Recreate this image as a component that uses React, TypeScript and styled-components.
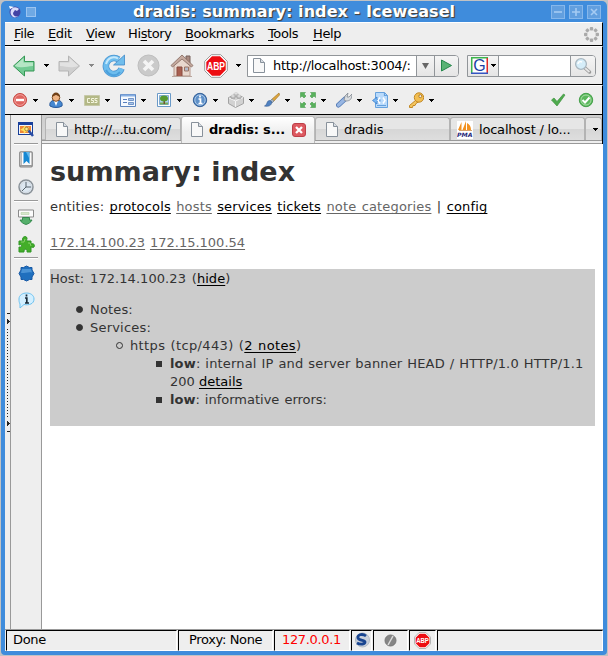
import React from "react";
import styled, { createGlobalStyle, css } from "styled-components";

const Global = createGlobalStyle`
  * { box-sizing: border-box; }
  html, body { margin: 0; padding: 0; background: #c3c3c3; overflow: hidden; }
  body { font-family: "DejaVu Sans", sans-serif; font-size: 13px; line-height: 18px; color: #000; }
`;

const Frame = styled.div`
  width: 608px;
  height: 656px;
  padding: 1px 1px 1px 1px;
  background: #c0c2c4;
`;
const Window = styled.div`
  width: 606px;
  height: 654px;
  padding: 0 4px 4px;
  border-radius: 5px 5px 4px 4px;
  background: #3f8cdc;
  display: flex;
  flex-direction: column;
`;
const TitleBar = styled.header`
  height: 21px;
  flex: none;
  display: flex;
  align-items: center;
  padding: 0 2px 0 3px;
`;
const Title = styled.h1`
  margin: 0;
  flex: 1;
  padding-left: 95px;
  font-size: 16px;
  line-height: 21px;
  font-weight: bold;
  color: #fff;
  letter-spacing: 0.07px;
  white-space: pre;
  text-shadow: 1px 1px 1px #444, 1px 1px 0 #555;
`;
const Controls = styled.div`
  display: flex;
  gap: 4px;
`;
const Client = styled.div`
  flex: 1;
  min-height: 0;
  display: flex;
  flex-direction: column;
  background: #eee;
`;
const bar = css`
  flex: none;
  display: flex;
  align-items: center;
  background: #eee;
  border-top: 1px solid #fff;
  border-right: 1px solid #000;
  border-bottom: 1px solid #000;
`;
const MenuBar = styled.nav`
  ${bar}
  height: 24px;
  padding-left: 9px;
`;
const MenuItem = styled.span<{ $w: number }>`
  width: ${(p) => p.$w}px;
  white-space: nowrap;
  letter-spacing: -0.38px;
  u { text-underline-offset: 2px; text-decoration-thickness: 1px; text-decoration-skip-ink: none; }
`;
const NavBar = styled.div`
  ${bar}
  height: 39px;
`;
const ToolBar = styled.div`
  ${bar}
  height: 30px;
`;
const Slot = styled.span<{ $w: number; $pad?: number }>`
  flex: none;
  width: ${(p) => p.$w}px;
  padding-left: ${(p) => p.$pad ?? 0}px;
  display: flex;
  align-items: center;
  svg { flex: none; display: block; }
`;
const Tool = styled.span`
  flex: none;
  width: 36px;
  display: flex;
  align-items: center;
  gap: 5px;
  svg { flex: none; display: block; }
`;
const Field = styled.div<{ $w: number }>`
  flex: none;
  width: ${(p) => p.$w}px;
  height: 22px;
  display: flex;
  border: 1px solid #919599;
  border-radius: 0 4px 4px 0;
  background: #fff;
  overflow: hidden;
`;
const FieldCell = styled.div<{ $w: number; $grey?: boolean; $line?: boolean }>`
  width: ${(p) => p.$w}px;
  flex: none;
  display: flex;
  align-items: center;
  justify-content: center;
  background: ${(p) => (p.$grey ? "linear-gradient(#f5f5f5,#e5e5e5)" : "#fff")};
  border-left: ${(p) => (p.$line ? "1px solid #919599" : "0")};
`;
const Url = styled.span<{ $w: number }>`
  width: ${(p) => p.$w}px;
  overflow: hidden;
  white-space: nowrap;
  line-height: 19px;
  letter-spacing: -0.3px;
`;
const Middle = styled.div`
  flex: 1;
  min-height: 0;
  display: flex;
`;
const Splitter = styled.div`
  width: 5px;
  padding-left: 1px;
  padding-top: 197px;
`;
const Sidebar = styled.aside`
  width: 32px;
  border-left: 1px solid #999;
  border-right: 1px solid #999;
  background: #eee;
  display: flex;
  flex-direction: column;
  align-items: center;
`;
const SideCell = styled.div<{ $h: number }>`
  height: ${(p) => p.$h}px;
  flex: none;
  display: flex;
  align-items: center;
  svg { display: block; }
`;
const SideRule = styled.hr`
  width: 24px;
  height: 2px;
  margin: 0;
  flex: none;
  border: 0;
  border-top: 1px solid #999;
  background: #fff;
`;
const Browser = styled.div`
  flex: 1;
  min-width: 0;
  display: flex;
  flex-direction: column;
`;
const TabStrip = styled.div`
  height: 29px;
  flex: none;
  display: flex;
  padding-left: 3px;
  background: linear-gradient(#cecece, #d7d7d7 24px, #999 25px, #999 26px, #eee 26px, #eee 28px, #999 28px);
  border-right: 1px solid #000;
`;
const Tab = styled.div<{ $w: number; $active?: boolean; $pad?: number }>`
  flex: none;
  width: ${(p) => p.$w}px;
  height: ${(p) => (p.$active ? 27 : 23)}px;
  margin-top: ${(p) => (p.$active ? 1 : 2)}px;
  padding: 1px 0 0 ${(p) => p.$pad ?? 10}px;
  padding-bottom: ${(p) => (p.$active ? 2 : 0)}px;
  display: flex;
  align-items: center;
  gap: 6px;
  white-space: nowrap;
  overflow: hidden;
  font-weight: ${(p) => (p.$active ? "bold" : "normal")};
  background: ${(p) => (p.$active ? "linear-gradient(#fff,#eee 60%)" : "linear-gradient(#e6e6e6 50%,#d6d6d6 50%,#dedede)")};
  border: 1px solid ${(p) => (p.$active ? "#bbb" : "#b3b3b3")};
  border-bottom: 0;
  border-radius: 3px 3px 0 0;
  svg { flex: none; display: block; }
`;
const TabLabel = styled.span<{ $w: number; $track?: number }>`
  width: ${(p) => p.$w}px;
  flex: none;
  letter-spacing: ${(p) => p.$track ?? 0}px;
`;
const Page = styled.main`
  flex: 1;
  background: #fff;
  color: #333;
  padding: 10px 8px 0;
`;
const Heading = styled.h2`
  margin: 0 0 9px;
  font-size: 27px;
  line-height: 35px;
  letter-spacing: 0.05px;
  font-weight: bold;
  white-space: nowrap;
`;
const Para = styled.p`
  margin: 0 0 18px;
  line-height: 18px;
  white-space: nowrap;
`;
const Spaced = styled.span<{ $l: number; $s: number }>`
  letter-spacing: ${(p) => p.$l}px;
  word-spacing: ${(p) => p.$s}px;
`;
const Link = styled.a<{ $visited?: boolean }>`
  color: ${(p) => (p.$visited ? "#666" : "#000")};
  text-decoration: underline;
  text-decoration-thickness: 1px;
  text-underline-offset: 2px;
  text-decoration-skip-ink: none;
`;
const Host = styled.section`
  height: 157px;
  margin-top: -1px;
  padding-top: 1px;
  background: #ccc;
`;
const List = styled.ul<{ $top?: boolean }>`
  list-style: none;
  margin: ${(p) => (p.$top ? 13 : 0)}px 0 0;
  padding: 0 0 0 26px;
`;
const Item = styled.li`
  display: flex;
`;
const Marker = styled.i<{ $kind: "disc" | "circle" | "square" }>`
  flex: none;
  width: ${(p) => (p.$kind === "square" ? 6 : 7)}px;
  height: ${(p) => (p.$kind === "square" ? 6 : 7)}px;
  margin: ${(p) => (p.$kind === "square" ? 6 : 5)}px ${(p) => (p.$kind === "square" ? 8 : 7)}px 0 0;
  border-radius: ${(p) => (p.$kind === "square" ? 0 : 4)}px;
  border: 1px solid #333;
  background: ${(p) => (p.$kind === "circle" ? "transparent" : "#333")};
`;
const ItemBody = styled.div`
  flex: 1;
  white-space: nowrap;
`;
const StatusBar = styled.footer`
  height: 22px;
  flex: none;
  display: flex;
  gap: 1px;
  border-top: 1px solid #999;
  padding-left: 1px;
`;
const Panel = styled.div<{ $w: number; $c?: string; $pad?: number }>`
  flex: none;
  width: ${(p) => p.$w}px;
  height: 21px;
  padding-left: ${(p) => p.$pad ?? 0}px;
  padding-bottom: 1px;
  display: flex;
  align-items: center;
  white-space: nowrap;
  letter-spacing: -0.35px;
  color: ${(p) => p.$c ?? "#000"};
  background: #eee;
  border: 1px solid #fff;
  border-top-color: #000;
  border-left-color: #000;
`;

type SvgProps = { w: number; h: number; children: React.ReactNode };
const Svg = ({ w, h, children }: SvgProps) => (
  <svg width={w} height={h} viewBox={`0 0 ${w} ${h}`}>{children}</svg>
);
const Caret = ({ color = "#000" }: { color?: string }) => (
  <Svg w={5} h={3}><path d="M0 0h5v1H4v1H3v1H2V2H1V1H0z" fill={color} shapeRendering="crispEdges" /></Svg>
);

const PageIcon = () => (
  <Svg w={12} h={15}>
    <path d="M.5.5h7l4 4v10H.5z" fill="#f8f8f8" stroke="#88919b" />
    <path d="M7.5.5v4h4" fill="#d7dce2" stroke="#88919b" />
  </Svg>
);
const Control = ({ kind }: { kind: "min" | "max" | "close" }) => (
  <Svg w={14} h={14}>
    <rect x=".5" y=".5" width="13" height="13" fill="#629fdf" stroke="#86b7eb" />
    <path d={kind === "min" ? "M3 7h8" : kind === "max" ? "M3 7h8M7 3v8" : "M4 4l6 6M10 4l-6 6"} stroke="#a5cbf3" strokeWidth="1.6" />
  </Svg>
);
const Throbber = () => (
  <Svg w={17} h={17}>
    {[0, 45, 90, 135, 180, 225, 270, 315].map((a) => (
      <rect key={a} x="6.8" y="1" width="3.4" height="3.4" rx="1" fill="#aaa" transform={`rotate(${a} 8.5 8.5)`} />
    ))}
  </Svg>
);
const Arrow = ({ on, flip }: { on?: boolean; flip?: boolean }) => (
  <Svg w={24} h={24}>
    <g transform={flip ? "matrix(-1 0 0 1 24 0)" : undefined}>
      <path d="M1.5 12 12.500 2v5.5h9.500v9.500h-9.500V22z" fill={on ? "#72ca93" : "#cfcfcf"} stroke={on ? "#349754" : "#b5b5b5"} strokeLinejoin="round" />
      <path d="M3 11.5 11.500 4v4.5h9.500V12c-7 0-9 3-18 0z" fill={on ? "#b5e6c5" : "#e2e2e2"} />
    </g>
  </Svg>
);
const Reload = () => (
  <Svg w={24} h={24}>
    <path d="M19.500 14.500A8 8 0 1 1 16.500 5.500" fill="none" stroke="#4a93cf" strokeWidth="6.500" />
    <path d="M19.500 14.500A8 8 0 1 1 16.500 5.500" fill="none" stroke="#6dbdee" strokeWidth="5" />
    <path d="M22.500 1v10H11.500l4-3.500z" fill="#70bdec" stroke="#3f88c6" strokeWidth=".8" />
    <path d="M4 10C6 3 12 2 16 4.500" fill="none" stroke="#c5e8fb" strokeWidth="2" />
    <path d="M4 16c3 6 10 7 14 2" fill="none" stroke="#4ba0dc" strokeWidth="2" />
  </Svg>
);
const Stop = () => (
  <Svg w={23} h={23}>
    <circle cx="11.5" cy="11.5" r="10.5" fill="#cacaca" stroke="#bdbdbd" />
    <path d="M7 7l9 9M16 7l-9 9" stroke="#f4f4f4" strokeWidth="3.6" />
  </Svg>
);
const Home = () => (
  <Svg w={24} h={25}>
    <path d="M16 3h4v7h-4z" fill="#a98a80" stroke="#76605a" />
    <path d="M4 11 12 5l8 6v12H4z" fill="#e9d8ce" stroke="#b5968a" />
    <path d="M12 2 1 12.500 2.500 14 12 6l9.500 8 1.500-1.500z" fill="#c5aa9f" stroke="#8d7268" strokeWidth=".9" />
    <path d="M7 14h5v9.500H7z" fill="#a85f50" stroke="#8a4d40" />
    <path d="M14.500 14h4v4h-4z" fill="#b5bccb" stroke="#9c7464" />
    <path d="M2 23.500h20" stroke="#b9a69d" />
  </Svg>
);
const AdBlockText = styled.text`
  font: bold 11px "Liberation Sans Narrow", "Liberation Sans", sans-serif;
  fill: #fff;
  text-anchor: middle;
`;
const AdBlock = ({ size }: { size: number }) => (
  <svg width={size} height={size} viewBox="0 0 24 24">
    <path d="M7.3.7h9.4l6.6 6.6v9.4l-6.6 6.6H7.3L.7 16.7V7.3z" fill="#fff" stroke="#999" />
    <path d="M8 2.3h8L21.7 8v8L16 21.7H8L2.3 16V8z" fill="#ed0d12" />
    <AdBlockText x="12" y="16" textLength="18" lengthAdjust="spacingAndGlyphs" letterSpacing="0">ABP</AdBlockText>
  </svg>
);
const Go = () => (
  <Svg w={13} h={13}><path d="M1.5 1 11.5 6.5l-10 5.500z" fill="#59b374" stroke="#25874b" strokeLinejoin="round" /></Svg>
);
const GText = styled.text`
  font: 16px "Liberation Sans", sans-serif;
  fill: #1b3fa4;
`;
const Google = () => (
  <Svg w={17} h={17}>
    <rect x="1" y="1" width="15" height="15" fill="#fff" />
    <path d="M.75 17V.75H17" fill="none" stroke="#3cb44c" strokeWidth="1.5" />
    <path d="M16.25 1v15" stroke="#e22a28" strokeWidth="1.5" />
    <path d="M0 16.25h17" stroke="#3555c2" strokeWidth="1.5" />
    <GText x="2.2" y="14.300">G</GText>
  </Svg>
);
const Magnifier = () => (
  <Svg w={18} h={18}>
    <path d="m11 11 4.500 4" stroke="#999" strokeWidth="3.5" strokeLinecap="round" />
    <path d="m11 11 4.500 4" stroke="#e5e5e5" strokeWidth="1.8" />
    <circle cx="7" cy="7" r="5.4" fill="#d5edf9" stroke="#a9b7c0" strokeWidth="1.3" />
    <path d="M4 7c0-2 2-3 4-2" fill="none" stroke="#fff" strokeWidth="1.4" />
  </Svg>
);

const tools: React.ReactNode[] = [
  <><circle cx="8" cy="8" r="6.5" fill="#df6560" stroke="#c64741" /><circle cx="8" cy="8" r="5.3" fill="none" stroke="#f0a09c" /><path d="M4 8h8" stroke="#fff" strokeWidth="2.4" /></>,
  <><path d="M2 14c-1-4 2-6 6-6s7 2 6 6c-3 2-9 2-12 0z" fill="#4587d0" stroke="#295999" /><path d="m6 9 2 5 2-5z" fill="#fff" /><circle cx="8" cy="5.500" r="3.8" fill="#eeb484" stroke="#7d4b22" /><path d="M4 5c0-6 8-6 8 0-2-1-3-2-4-2S6 4 4 5z" fill="#704119" /></>,
  <><path d="M.5 3.5h15v10H.5z" fill="#b3b886" stroke="#c6c8a8" /><path d="M6 6.500H3.500v4H6M10 6.500H7.500v2h2v2H7M13.500 6.500H11v2h2v2h-2.500" fill="none" stroke="#f4f5df" /></>,
  <><path d="M.5 2.500h15v12H.5z" fill="#f5f9fe" stroke="#5c84bd" /><path d="M1 3.500h14" stroke="#86aee2" strokeWidth="2" /><path d="M3 7.500h4M3 10.500h4" stroke="#587ebc" /><path d="M8.500 6.500h5v2h-5zM8.500 10.500h5v2h-5z" fill="#abc6ec" stroke="#5c84bd" strokeWidth=".8" /></>,
  <><path d="M1.500 1.500h13v13h-13z" fill="#fff" stroke="#6a9ac8" /><path d="M3.500 3.500h9v9h-9z" fill="#add3f1" stroke="#84add0" /><path d="M4 10.500h8v2H4z" fill="#77ad56" /><path d="M7.500 8h1.500v4H7.500z" fill="#76502e" /><ellipse cx="8" cy="6.500" rx="4" ry="3" fill="#56992f" /></>,
  <><circle cx="8" cy="8" r="6.700" fill="#4c80bd" stroke="#386399" /><circle cx="8" cy="8" r="5.200" fill="#5f91c8" stroke="#adc9e8" /><path d="M8 3.500v2M6.500 7H8.500v4.500M6.500 11.500h4" fill="none" stroke="#fff" strokeWidth="1.700" /></>,
  <><path d="m.5 5.500 8-3 7 3v6l-8 4-7-4z" fill="#d2d2d2" stroke="#a2a2a2" /><path d="m1 6 6.500 3L15 5.500M7.500 9v6" fill="none" stroke="#f4f4f4" /><path d="M3 4v2c1 1 4 1 4 0V4M9 4v2c1 1 4 1 4 0V4M6 2v1.500c1 1 3 1 4 0V2" fill="#c4c4c4" stroke="#999" strokeWidth=".7" /><ellipse cx="5" cy="4" rx="2" ry="1" fill="#eee" stroke="#aaa" strokeWidth=".5" /><ellipse cx="11" cy="4" rx="2" ry="1" fill="#eee" stroke="#aaa" strokeWidth=".5" /><ellipse cx="8" cy="1.800" rx="2" ry="1" fill="#eee" stroke="#aaa" strokeWidth=".5" /></>,
  <><path d="M15 1 7 8l2 2 6.500-7z" fill="#dda63d" stroke="#a67625" strokeWidth=".7" /><path d="m8 7-2 2 2 2 2-2z" fill="#aab3bd" stroke="#798794" strokeWidth=".6" /><path d="M6 8.500c-4 0-2 4-5.500 5.500 4 1 7-.5 7.500-4z" fill="#4f81c1" stroke="#365d90" strokeWidth=".6" /></>,
  <g fill="#59b15c" stroke="#39943f" strokeWidth=".5"><path d="M.5.5h5L4 2l2 2-2 2-2-2L.5 5.500zM15.500.5v5L14 4l-2 2-2-2 2-2L10.500.5zM.5 15.500v-5L2 12l2-2 2 2-2 2 1.500 1.500zM15.500 15.500h-5L12 14l-2-2 2-2 2 2 1.500-1.500z" /></g>,
  <><path d="m9 7-6.500 6" stroke="#5279b5" strokeWidth="5" strokeLinecap="round" /><path d="m8.500 7.500-6 5.500" stroke="#98b6e2" strokeWidth="3.400" strokeLinecap="round" /><path d="m8 8 1-4 3-3-1 4h2l3-3c0 5-2 7-6 7z" fill="#d9dcdf" stroke="#808890" strokeWidth=".8" /></>,
  <><path d="M3.500.5h9l3 3v12h-12z" fill="#b9dafb" stroke="#66a1dd" /><path d="M12.500.5v3h3M5 13.500h9" fill="none" stroke="#66a1dd" strokeWidth="1.200" /><path d="M5 5 .5 8.500 5 12v-2.500h3v-2H5z" fill="#79b6f3" stroke="#3478c5" strokeWidth=".7" /><path d="m8 5.500-2 3 2 3M11 5.500l2 3-2 3" fill="none" stroke="#fff" strokeWidth="1.500" /></>,
  <><path d="m8 8-6.500 5.500v2h3l.5-2h2l1-2 3-2z" fill="#f4c55e" stroke="#c18826" /><circle cx="11" cy="5.500" r="4.700" fill="#f2be51" stroke="#c18826" /><circle cx="12.300" cy="4.200" r="1.500" fill="#eee" stroke="#b37d22" /></>,
];
const Check = () => (
  <Svg w={16} h={16}><path d="m1.500 8 2.500-2 3 3.500L13.500 2l1.500 1L7 14z" fill="#4eaa4d" stroke="#409441" strokeWidth=".7" /></Svg>
);
const CheckDisc = () => (
  <Svg w={16} h={16}>
    <circle cx="8" cy="8" r="6.700" fill="#5bb75c" stroke="#45a04a" />
    <circle cx="8" cy="8" r="5" fill="none" stroke="#a8dda7" />
    <path d="M4.500 8 7 10.500 11.500 5.500" fill="none" stroke="#fff" strokeWidth="2" />
  </Svg>
);
const PmaText = styled.text`
  font: italic bold 6px "DejaVu Sans", sans-serif;
  fill: #252579;
`;
const Pma = () => (
  <Svg w={16} h={18}>
    <rect width="16" height="18" fill="#fff" />
    <path d="M4.500 1v8H1zM9 0v9H5.500zM10 2q4 2 4 7h-4z" fill="#f29120" />
    <path d="M2 9.500h13" stroke="#d7a36e" />
    <PmaText x="0" y="16" textLength="15.500" lengthAdjust="spacingAndGlyphs">PMA</PmaText>
  </Svg>
);
const TabClose = () => (
  <Svg w={14} h={14}>
    <rect x=".5" y=".5" width="13" height="13" rx="2.500" fill="#dd5960" stroke="#bd3f48" />
    <path d="m4 4 6 6M10 4l-6 6" stroke="#fff" strokeWidth="2.300" />
  </Svg>
);
const SideIcons = {
  search: <Svg w={16} h={16}><rect x=".5" y="1.500" width="14" height="12" fill="#f3f5f8" stroke="#173e98" /><path d="M0 2.500h15" stroke="#183f9b" strokeWidth="3" /><path d="M2 5h11v7H2z" fill="#ee8638" /><path d="m7 4 1 3 3-1-1 3 2 2-4-.5L6 13l-.5-3L2 9l3-2z" fill="#ffe35b" /><circle cx="8.500" cy="8" r="1.800" fill="#ffe883" stroke="#8a6a32" strokeWidth=".7" /><path d="m10.500 9.500 4.500 5.500" stroke="#294ca5" strokeWidth="2.500" /></Svg>,
  bookmark: <Svg w={14} h={17}><rect x=".8" y=".8" width="12.400" height="15" rx="1" fill="#fafafa" stroke="#858585" strokeWidth="1.300" /><path d="M2.500 2v13" stroke="#bbb" /><path d="M4.500 1h6v12l-3-3-3 3z" fill="#1688d3" /><path d="M7 1h3v6z" fill="#62b8eb" /><path d="M1 14.500h12" stroke="#999" /></Svg>,
  clock: <Svg w={16} h={16}><circle cx="8" cy="8" r="7" fill="#f3f7fb" stroke="#8a9299" strokeWidth="1.500" /><circle cx="8" cy="8" r="5.500" fill="#dce7f1" stroke="#c1ccd6" strokeWidth=".7" /><path d="M8 3v5h5M4 12l4-4" fill="none" stroke="#56636c" /></Svg>,
  download: <Svg w={16} h={16}><path d="M.5 1h15v7H.5z" fill="#fcfcfc" stroke="#8b8b8b" /><path d="M3 3.500h8v2H3z" fill="#d7e7ca" stroke="#abc99c" strokeWidth=".5" /><path d="M4.500 8.500h7V11H14c-1 2.500-4 4-6 4.500C6 15 3 13.500 2 11h2.500z" fill="#55b06b" stroke="#237c3e" strokeWidth=".8" /></Svg>,
  puzzle: <Svg w={17} h={17}><path d="M1 5h4C3 1 8-1 9 2c.3 1-1 2 0 3h4v3c3-1 4 1 3 3-1 1-2 0-3 0v5H9c1-3-3-4-3-1v1H1v-5c4 1 3-4 0-2z" fill="#43ae29" stroke="#2e9525" /><path d="M3 6h3l1-3M10 7h2l1 3" fill="none" stroke="#89d26c" /></Svg>,
  gear: <Svg w={17} h={17}><path d="M3 2.500h2.500L8.500 1l3 1.500H14V5l2 3.500-2 3.500v2.500h-2.500L8.500 16l-3-1.500H3V12L1 8.500 3 5z" fill="#1f6fbe" stroke="#1759a5" /><path d="M4 4h9l1 3.500c-4-1-8 1-11 .5z" fill="#4a93d6" /></Svg>,
  info: <Svg w={17} h={17}><path d="M1 7c0-8 15-8 15 0 0 5-5 6.500-10 5.500L2 16V12C1 10 1 9 1 7z" fill="#d3efff" stroke="#6cc2f0" /><path d="M8.500 2.500v2M7 6h1.800v5M7 11h4" fill="none" stroke="#182a38" strokeWidth="1.700" /></Svg>,
};

const menus: [string, number, number][] = [
  ["File", 0, 34], ["Edit", 0, 38], ["View", 0, 42], ["History", 2, 57],
  ["Bookmarks", 0, 83], ["Tools", 0, 45], ["Help", 0, 270],
];

export default function App() {
  return (
    <Frame>
      <Global />
      <Window>
        <TitleBar>
          <Slot $w={18}>
            <Svg w={13} h={14}>
              <circle cx="7" cy="7" r="5.500" fill="#4343a5" />
              <path d="M3 5c2-4 6-3 8-1L9 6 7 5 5 8c0 3 3 4 5 3-4 4-9-1-7-6z" fill="#d9dcfb" />
              <path d="m1 1 5 1-4 2z" fill="#fff" />
            </Svg>
          </Slot>
          <Slot $w={12}>
            <Svg w={10} h={10}><rect x=".5" y=".5" width="9" height="9" fill="#6fa9e4" stroke="#9ac4f1" /></Svg>
          </Slot>
          <Title>dradis: summary: index - Iceweasel</Title>
          <Controls><Control kind="min" /><Control kind="max" /><Control kind="close" /></Controls>
        </TitleBar>
        <Client>
          <MenuBar>
            {menus.map(([name, at, w]) => (
              <MenuItem key={name} $w={w}>{name.slice(0, at)}<u>{name[at]}</u>{name.slice(at + 1)}</MenuItem>
            ))}
            <Throbber />
          </MenuBar>
          <NavBar>
            <Slot $w={39} $pad={7}><Arrow on /></Slot>
            <Slot $w={13}><Caret /></Slot>
            <Slot $w={32}><Arrow flip /></Slot>
            <Slot $w={13}><Caret color="#888" /></Slot>
            <Slot $w={35}><Reload /></Slot>
            <Slot $w={33}><Stop /></Slot>
            <Slot $w={34}><Home /></Slot>
            <Slot $w={32}><AdBlock size={24} /></Slot>
            <Slot $w={11}><Caret /></Slot>
            <Field $w={212}>
              <FieldCell $w={25}><Slot $w={16}><PageIcon /></Slot></FieldCell>
              <Url $w={144}>http://localhost:3004/:</Url>
              <FieldCell $w={18} $grey $line><svg width="7" height="6"><path d="M0 0h7L3.500 6z" fill="#666" /></svg></FieldCell>
              <FieldCell $w={24} $grey $line><Go /></FieldCell>
            </Field>
            <Slot $w={8} />
            <Field $w={129}>
              <FieldCell $w={30} $grey><Google /><Slot $w={8} $pad={3}><Caret /></Slot></FieldCell>
              <FieldCell $w={72} $line />
              <FieldCell $w={25} $line $grey><Magnifier /></FieldCell>
            </Field>
          </NavBar>
          <ToolBar>
            <Slot $w={7} />
            {tools.map((icon, i) => <Tool key={i}><Svg w={16} h={16}>{icon}</Svg><Caret /></Tool>)}
            <Slot $w={134} $pad={106}><Check /></Slot>
            <CheckDisc />
          </ToolBar>
          <Middle>
            <Splitter>
              <Svg w={4} h={124}>
                <path d="M1 1.500h3M1 119.500h3" stroke="#222" />
                <path d="M1 7h1v1h1v1h1v1H3v1H2v1H1zM1 109h1v1h1v1h1v1H3v1H2v1H1z" fill="#222" />
                <path d="M1.500 17v88" stroke="#222" strokeDasharray="1 2" />
              </Svg>
            </Splitter>
            <Sidebar>
              <SideCell $h={28}>{SideIcons.search}</SideCell>
              <SideRule />
              <SideCell $h={29}>{SideIcons.bookmark}</SideCell>
              <SideCell $h={26}>{SideIcons.clock}</SideCell>
              <SideRule />
              <SideCell $h={29}>{SideIcons.download}</SideCell>
              <SideCell $h={26}>{SideIcons.puzzle}</SideCell>
              <SideRule />
              <SideCell $h={29}>{SideIcons.gear}</SideCell>
              <SideCell $h={25}>{SideIcons.info}</SideCell>
            </Sidebar>
            <Browser>
              <TabStrip>
                <Tab $w={136}><PageIcon /><TabLabel $w={100} $track={-0.3}>http://...tu.com/</TabLabel></Tab>
                <Tab $w={134} $active $pad={9}><PageIcon /><TabLabel $w={77} $track={-0.2}>dradis: s...</TabLabel><TabClose /></Tab>
                <Tab $w={135}><PageIcon /><TabLabel $w={80} $track={-0.15}>dradis</TabLabel></Tab>
                <Tab $w={135} $pad={6}><Pma /><TabLabel $w={95} $track={-0.2}>localhost / lo...</TabLabel></Tab>
                <Tab $w={17} $pad={7}><Caret /></Tab>
              </TabStrip>
              <Page>
                <Heading>summary: index</Heading>
                <Para>
                  <Spaced $l={0.16} $s={1.05}>
                    entities: <Link>protocols</Link> <Link $visited>hosts</Link> <Link>services</Link> <Link>tickets</Link>{" "}
                    <Link $visited>note categories</Link> | <Link>config</Link>
                  </Spaced>
                </Para>
                <Para><Spaced $l={0} $s={0.7}><Link $visited>172.14.100.23</Link> <Link $visited>172.15.100.54</Link></Spaced></Para>
                <Host>
                  <Spaced as="div" $l={0.06} $s={1.6}>Host: 172.14.100.23 (<Link>hide</Link>)</Spaced>
                  <List $top>
                    <Item><Marker $kind="disc" /><ItemBody><Spaced $l={0.16} $s={0}>Notes:</Spaced></ItemBody></Item>
                    <Item>
                      <Marker $kind="disc" />
                      <ItemBody>
                        <Spaced $l={0.2} $s={0}>Services:</Spaced>
                        <List>
                          <Item>
                            <Marker $kind="circle" />
                            <ItemBody>
                              <Spaced $l={0.38} $s={0.6}>https (tcp/443) (<Link>2 notes</Link>)</Spaced>
                              <List>
                                <Item>
                                  <Marker $kind="square" />
                                  <ItemBody>
                                    <Spaced $l={0.16} $s={0.65}><b>low</b>: internal IP and server banner HEAD / HTTP/1.0 HTTP/1.1</Spaced>
                                    <br />200 <Link>details</Link>
                                  </ItemBody>
                                </Item>
                                <Item><Marker $kind="square" /><ItemBody><Spaced $l={0} $s={0.9}><b>low</b>: informative errors:</Spaced></ItemBody></Item>
                              </List>
                            </ItemBody>
                          </Item>
                        </List>
                      </ItemBody>
                    </Item>
                  </List>
                </Host>
              </Page>
            </Browser>
          </Middle>
          <StatusBar>
            <Panel $w={171} $pad={6}>Done</Panel>
            <Panel $w={95} $pad={10}>Proxy: None</Panel>
            <Panel $w={76} $c="#f00" $pad={7}>127.0.0.1</Panel>
            <Panel $w={21} $pad={2}>
              <Svg w={16} h={16}>
                <circle cx="8.500" cy="8" r="7" fill="#c9d0db" stroke="#b2bac5" />
                <path d="M12 4C8 1 3 3 4 6s7 2 7 4-4 3-8 1" fill="none" stroke="#184490" strokeWidth="2.800" />
              </Svg>
            </Panel>
            <Panel $w={35} $pad={10}>
              <Svg w={13} h={13}><circle cx="6.500" cy="6.500" r="5.500" fill="#858585" stroke="#777" /><path d="m4 11 5-9" stroke="#ddd" strokeWidth="1.500" /></Svg>
            </Panel>
            <Panel $w={27} $pad={4}><AdBlock size={17} /></Panel>
            <Panel $w={166} />
          </StatusBar>
        </Client>
      </Window>
    </Frame>
  );
}
